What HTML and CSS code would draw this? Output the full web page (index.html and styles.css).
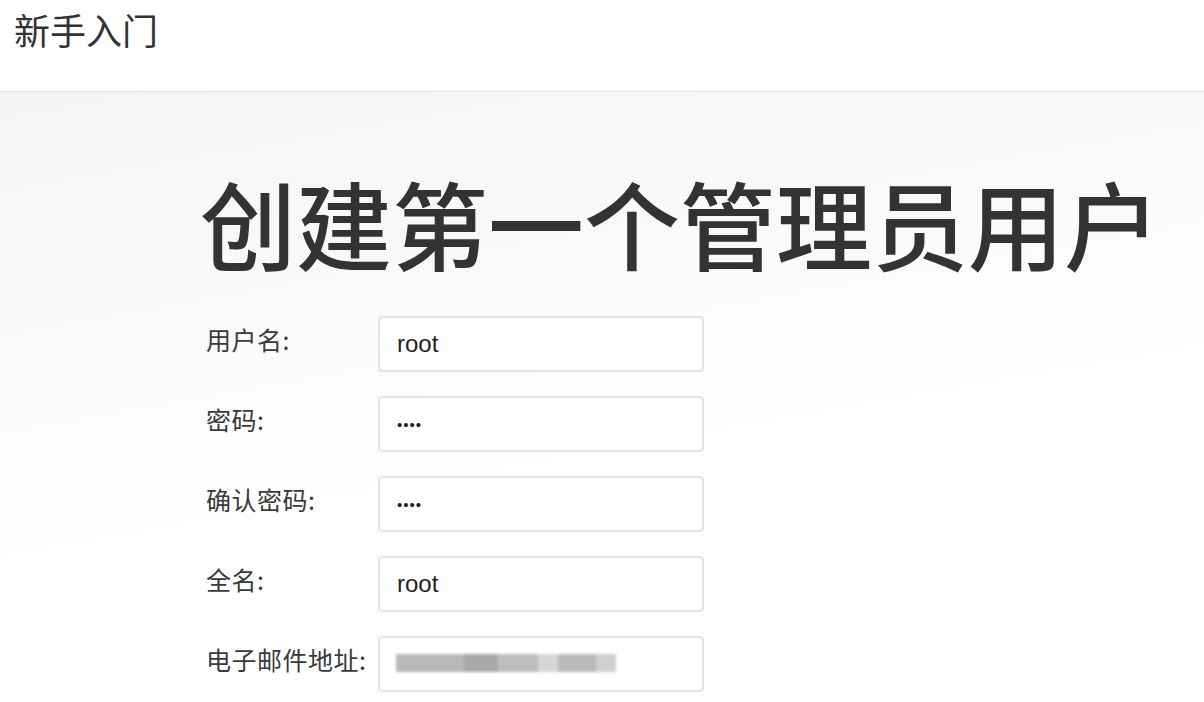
FILE: index.html
```html
<!DOCTYPE html>
<html lang="zh-CN">

<head>
  <meta charset="utf-8">
  <title>新手入门</title>
  <link rel="stylesheet" href="styles.css">
</head>

<body>
  <div class="header">
    <div class="header-title">新手入门</div>
  </div>
  <div class="setup-body">
    <h1 class="page-title">创建第一个管理员用户</h1>
    <div class="setup-form">
      <label class="form-label" for="username">用户名:</label>
      <input class="form-input" type="text" id="username" value="root">

      <label class="form-label" for="password1">密码:</label>
      <input class="form-input" type="password" id="password1" value="root">

      <label class="form-label" for="password2">确认密码:</label>
      <input class="form-input" type="password" id="password2" value="root">

      <label class="form-label" for="fullname">全名:</label>
      <input class="form-input" type="text" id="fullname" value="root">

      <label class="form-label" for="email">电子邮件地址:</label>
      <div class="email-field">
        <input class="form-input" type="text" id="email">
        <div class="email-blur">
          <span class="b1"></span><span class="b2"></span><span class="b3"></span><span class="b4"></span><span class="b5"></span><span class="b6"></span><span class="b7"></span>
        </div>
      </div>
    </div>
  </div>
</body>

</html>
```

FILE: styles.css
```css
body {
  margin: 0;
  font-family: 'Liberation Sans', 'Noto Sans CJK SC', sans-serif;
  color: #333;
  background-color: #fff;
}

.header {
  height: 91px;
  border-bottom: 1px solid #e3e3e3;
  background-color: #fff;
}

.header-title {
  padding: 6px 0 0 14px;
  font-family: 'Noto Sans CJK SC', sans-serif;
  font-size: 36px;
  line-height: 46px;
  color: #333;
}

.setup-body {
  height: 610px;
  padding-left: 200px;
  background: linear-gradient(170deg, #f4f4f4 0%, #fafafa 35%, #fff 60%);
  overflow: hidden;
}

.page-title {
  margin: 0;
  padding-top: 70px;
  font-family: 'Noto Sans CJK SC', sans-serif;
  font-size: 96px;
  font-weight: 500;
  line-height: 120px;
  color: #333;
  white-space: nowrap;
}

.setup-form {
  display: grid;
  grid-template-columns: 178px 326px;
  row-gap: 24px;
  margin-top: 34px;
}

.form-label {
  padding-left: 6px;
  padding-top: 5px;
  font-family: 'Noto Sans CJK SC', sans-serif;
  font-size: 25px;
  letter-spacing: 0.5px;
  color: #3a3a3a;
}

.form-input {
  width: 100%;
  height: 56px;
  padding: 0 17px;
  border: 2px solid #e4e4e4;
  border-radius: 4px;
  background-color: #fff;
  box-sizing: border-box;
  font-family: 'Liberation Sans', sans-serif;
  font-size: 24px;
  color: #222;
}

input[type="password"] {
  font-size: 15px;
  letter-spacing: 1px;
}

.email-field {
  position: relative;
}

.email-blur {
  position: absolute;
  left: 18px;
  top: 18px;
  display: flex;
  filter: blur(1.5px);
}

.email-blur span {
  display: block;
  width: 34px;
  height: 18px;
  background-color: #b8b8b8;
}

.email-blur .b3 { background-color: #a9a9a9; }
.email-blur .b4 { background-color: #bdbdbd; width: 40px; }
.email-blur .b5 { background-color: #d6d6d6; width: 20px; }
.email-blur .b6 { background-color: #b9b9b9; width: 38px; }
.email-blur .b7 { background-color: #cfcfcf; width: 20px; }
```
